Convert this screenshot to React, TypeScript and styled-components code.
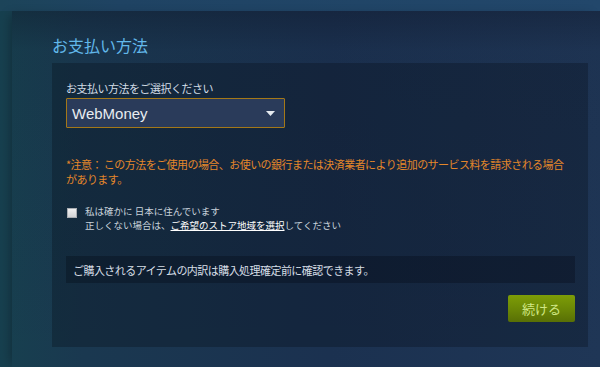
import React, { useState } from 'react'
import styled, { createGlobalStyle } from 'styled-components'

const GlobalStyle = createGlobalStyle`
  html, body {
    margin: 0;
    padding: 0;
    height: 100%;
  }
  body {
    background: linear-gradient(90deg, #17404f 0%, #1a3850 14%, #1b3150 55%, #1f3656 100%);
    font-family: 'Noto Sans CJK JP', 'Liberation Sans', sans-serif;
    overflow: hidden;
  }
  #root {
    height: 100%;
  }
`

export default function App() {
  const [resident, setResident] = useState(false)

  return (
    <>
      <GlobalStyle />
      <Page>
        <TopBand />
        <Main>
          <Title>お支払い方法</Title>

          <Panel>
            <FieldLabel>お支払い方法をご選択ください</FieldLabel>
            <SelectBox>
              <SelectValue>WebMoney</SelectValue>
              <Arrow viewBox='0 0 9 5' aria-hidden='true'>
                <path d='M0 0 H9 L4.5 5 Z' fill='#e6ebf0' />
              </Arrow>
            </SelectBox>

            <Warning>
              *注意： この方法をご使用の場合、お使いの銀行または決済業者により追加のサービス料を請求される場合があります。
            </Warning>

            <CheckRow>
              <CheckBox
                type='checkbox'
                checked={resident}
                onChange={() => setResident(!resident)}
              />
              <CheckText>
                <CheckLine>私は確かに 日本に住んでいます</CheckLine>
                <CheckLine>
                  正しくない場合は、<StoreLink href='#'>ご希望のストア地域を選択</StoreLink>してください
                </CheckLine>
              </CheckText>
            </CheckRow>

            <InfoBox>ご購入されるアイテムの内訳は購入処理確定前に確認できます。</InfoBox>

            <ButtonRow>
              <ContinueButton type='button'>続ける</ContinueButton>
            </ButtonRow>
          </Panel>
        </Main>
      </Page>
    </>
  )
}

const Page = styled.div`
  display: flex;
  flex-direction: column;
  height: 100%;
`

const TopBand = styled.div`
  height: 11px;
  flex-shrink: 0;
  background: linear-gradient(90deg, #1c4459 0%, #1f4363 20%, #22476b 100%);
`

const Main = styled.main`
  flex: 1;
  margin-left: 12px;
  padding: 24px 0 0 40px;
  display: flex;
  flex-direction: column;
  gap: 8px;
  background: linear-gradient(180deg, rgba(12, 18, 34, 0.35) 0%, rgba(12, 18, 34, 0.08) 40px, rgba(0, 0, 0, 0) 100%);
  box-shadow: -6px 0 10px -4px rgba(0, 0, 0, 0.25);
`

const Title = styled.h2`
  margin: 0;
  font-size: 16px;
  line-height: 20px;
  font-weight: 400;
  color: #62b8ea;
`

const Panel = styled.section`
  width: 536px;
  box-sizing: border-box;
  padding: 18px 13px 25px 14px;
  display: flex;
  flex-direction: column;
  background: rgba(6, 12, 22, 0.3);
`

const FieldLabel = styled.div`
  font-size: 11px;
  line-height: 14px;
  letter-spacing: -0.5px;
  color: #d2dce5;
`

const SelectBox = styled.div`
  margin-top: 3px;
  width: 219px;
  height: 30px;
  box-sizing: border-box;
  border: 1px solid #a47818;
  border-radius: 1px;
  background: #2a3b5a;
  display: flex;
  align-items: center;
  justify-content: space-between;
  padding: 0 9px 0 5px;
  cursor: pointer;
`

const SelectValue = styled.span`
  font-family: 'Liberation Sans', Arial, sans-serif;
  font-size: 15px;
  color: #e8ecf0;
`

const Arrow = styled.svg`
  width: 9px;
  height: 5px;
`

const Warning = styled.p`
  margin: 29px 0 0;
  max-width: 502px;
  font-size: 11px;
  line-height: 15px;
  letter-spacing: -0.55px;
  color: #e4872a;
`

const CheckRow = styled.label`
  margin-top: 17px;
  display: flex;
  align-items: flex-start;
  gap: 8px;
  cursor: pointer;
`

const CheckBox = styled.input`
  appearance: none;
  margin: 4px 0 0 1px;
  width: 10px;
  height: 10px;
  box-sizing: border-box;
  border: 1px solid #a9adb2;
  background: linear-gradient(180deg, #f0f0f0, #d2d4d6);
  flex-shrink: 0;
  cursor: pointer;

  &:checked {
    background: linear-gradient(180deg, #9fd2f5, #5aa8e0);
  }
`

const CheckText = styled.div`
  display: flex;
  flex-direction: column;
  font-size: 9.5px;
  color: #c9d3dc;
`

const CheckLine = styled.span`
  display: block;
  line-height: 14px;
`

const StoreLink = styled.a`
  color: #ffffff;
  text-decoration: underline;
`

const InfoBox = styled.div`
  margin-top: 24px;
  height: 27px;
  display: flex;
  align-items: center;
  padding-left: 7px;
  background: rgba(4, 8, 16, 0.3);
  font-size: 11px;
  letter-spacing: -0.55px;
  color: #d6dee6;
`

const ButtonRow = styled.div`
  margin-top: 12px;
  display: flex;
  justify-content: flex-end;
`

const ContinueButton = styled.button`
  width: 67px;
  height: 27px;
  border: none;
  border-radius: 2px;
  background: linear-gradient(180deg, #7d9d07 0%, #6a8606 55%, #586f05 100%);
  color: #d2e885;
  font-family: 'Noto Sans CJK JP', sans-serif;
  font-size: 13px;
  cursor: pointer;
  padding: 0;

  &:hover {
    background: linear-gradient(180deg, #8db20a 0%, #6f8c07 100%);
    color: #ffffff;
  }
`
